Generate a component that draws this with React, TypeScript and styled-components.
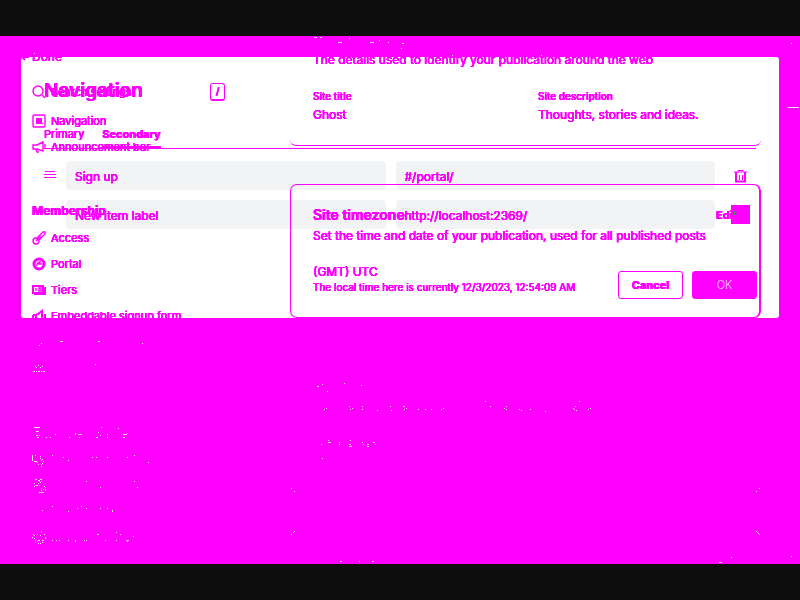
import React from "react";
import styled, { createGlobalStyle } from "styled-components";

const MAGENTA = "#ff00ff";

const GlobalStyle = createGlobalStyle`
  * { box-sizing: border-box; }
  body { margin: 0; background: #0d0d0d; }
  button, input { font: inherit; color: inherit; text-shadow: inherit; }
  h1, h2, p, dl, dd, ul { margin: 0; padding: 0; }
`;

const Page = styled.div`
  position: relative;
  min-height: 100vh;
  padding: 36px 0;
  display: flex;
  overflow: hidden;
  font-family: Inter, "Liberation Sans", sans-serif;
  font-size: 12px;
  line-height: 16px;
  font-weight: 400;
  color: ${MAGENTA};
  text-shadow: 0 0 0 ${MAGENTA}, 0 0 0 ${MAGENTA}, 0 0 0 ${MAGENTA}, 0 0 0 ${MAGENTA}, 0 0 0 ${MAGENTA};
`;

const Stage = styled.main`
  flex: 1;
  min-width: 0;
  padding: 21px;
  background: ${MAGENTA};
`;

const Panel = styled.div`
  position: relative;
  overflow: hidden;
  background: #fff;
  border-radius: 3px;
`;

const Dialog = styled.section`
  padding: 20px 22px 19px 23px;
`;

const DialogTitle = styled.h1`
  font-size: 19px;
  line-height: 28px;
  font-weight: 600;
`;

const Tabs = styled.div`
  display: flex;
  gap: 18px;
  margin-top: 21px;
  margin-right: 1px;
  border-bottom: 1px solid ${MAGENTA};
`;

const Tab = styled.button<{ $active?: boolean }>`
  height: 22px;
  padding: 0 0 4px;
  border: 0;
  border-bottom: 2px solid ${(p) => (p.$active ? MAGENTA : "transparent")};
  background: none;
  font-size: 11px;
  font-weight: ${(p) => (p.$active ? 700 : 400)};
`;

const Items = styled.div`
  display: grid;
  gap: 10px;
  margin-top: 12px;
  margin-right: 1px;
`;

const ItemRow = styled.div`
  display: grid;
  grid-template-columns: 22px minmax(0, 1fr) 10px minmax(0, 1fr) 41px;
  align-items: center;
`;

const ItemInput = styled.input<{ $column: number }>`
  grid-column: ${(p) => p.$column};
  width: 100%;
  height: 29px;
  padding: 2px 9px 0;
  border: 0;
  border-radius: 4px;
  background: #f1f3f4;
  outline: none;
  &::placeholder { color: ${MAGENTA}; opacity: 1; }
`;

const IconButton = styled.button`
  grid-column: 5;
  display: flex;
  justify-content: flex-end;
  padding: 0 8px 0 0;
  border: 0;
  background: none;
`;

const Footer = styled.footer`
  display: flex;
  justify-content: flex-end;
  gap: 9px;
  margin-top: 42px;
`;

const ActionButton = styled.button<{ $primary?: boolean }>`
  min-width: 65px;
  height: 28px;
  padding: 0 8px;
  border: 1px solid ${MAGENTA};
  border-radius: 3px;
  background: ${(p) => (p.$primary ? MAGENTA : "transparent")};
  color: ${(p) => (p.$primary ? "#ffd0ff" : MAGENTA)};
  text-shadow: ${(p) => (p.$primary ? "none" : "inherit")};
  font-size: 11px;
  font-weight: ${(p) => (p.$primary ? 300 : 700)};
`;

const Settings = styled.div`
  position: absolute;
  inset: 0;
  display: grid;
  grid-template-columns: 269px minmax(0, 1fr);
  align-items: start;
  padding-right: 18px;
  pointer-events: none;
`;

const Sidebar = styled.nav`
  margin-top: -8px;
  padding: 0 65px 0 11px;
`;

const Back = styled.a`
  display: flex;
  align-items: center;
  gap: 3px;
  height: 16px;
  margin-left: -11px;
  color: inherit;
  text-decoration: none;
`;

const SearchRow = styled.label`
  display: flex;
  align-items: center;
  gap: 5px;
  height: 28px;
  margin-top: 13px;
`;

const SearchInput = styled.input`
  flex: 1;
  min-width: 0;
  padding: 0;
  border: 0;
  background: none;
  font-size: 11px;
  &::placeholder { color: ${MAGENTA}; opacity: 1; }
`;

const KeyHint = styled.kbd`
  width: 15px;
  height: 18px;
  border: 1px solid ${MAGENTA};
  border-bottom-width: 2px;
  border-radius: 3px;
  font: 500 10px/15px Inter, sans-serif;
  text-align: center;
`;

const NavList = styled.ul<{ $gap: number }>`
  margin-top: ${(p) => p.$gap}px;
  list-style: none;
`;

const NavLink = styled.a`
  display: flex;
  align-items: center;
  gap: 5px;
  height: 26px;
  color: inherit;
  font-size: 11px;
  text-decoration: none;
  white-space: nowrap;
`;

const SectionTitle = styled.h2`
  margin-top: 41px;
  font-size: 12px;
  line-height: 20px;
  font-weight: 700;
`;

const Content = styled.div`
  margin-top: -5px;
`;

const SiteCard = styled.section`
  padding: 0 23px 22px;
  border-bottom: 1px solid ${MAGENTA};
  border-radius: 6px;
`;

const Fields = styled.dl`
  display: grid;
  grid-template-columns: 1fr 1fr;
  column-gap: 25px;
  margin-top: 21px;
  dt { font-size: 10px; line-height: 14px; font-weight: 500; }
  dd { margin-top: 4px; }
`;

const ZoneCard = styled.section`
  margin-top: 38px;
  padding: 20px 9px 23px 22px;
  border: 1px solid ${MAGENTA};
  border-right-width: 2px;
  border-radius: 7px;
`;

const ZoneHead = styled.header`
  display: flex;
  justify-content: space-between;
  height: 23px;
  h2 { font-size: 14px; line-height: 20px; font-weight: 600; }
`;

const EditButton = styled.button`
  position: relative;
  width: 34px;
  height: 20px;
  padding: 0;
  border: 0;
  background: none;
  font-size: 11px;
  font-weight: 700;
  text-align: left;
  line-height: 18px;
  &::after {
    content: "";
    position: absolute;
    inset: 0 0 1px 15px;
    background: ${MAGENTA};
  }
`;

const Zone = styled.p`
  margin-top: 20px;
`;

const Note = styled.p`
  font-size: 10px;
  line-height: 14px;
`;

const Residue = styled.svg`
  position: absolute;
  top: 0;
  left: 0;
  pointer-events: none;
`;

const iconPaths: Record<string, React.ReactNode> = {
  search: <><circle cx="6" cy="6" r="5" /><path d="M10 10l3 3" /></>,
  nav: <><rect x="1" y="1" width="12" height="12" rx="1" /><path d="M4 4h6v5H4z" fill={MAGENTA} stroke="none" /><path d="M4 9.500h7" strokeWidth="1" /></>,
  horn: <><path d="M1 5h4l6-3v9L5 9H1zM4 9l1 3h2M13 4v5" /></>,
  access: <><path d="M5 7l6-6h2v2L7 9" /><circle cx="4" cy="10" r="3" /><path d="M4 10l5-5" /></>,
  portal: <><circle cx="7" cy="7" r="5" strokeWidth="3" /><path d="M5 9V7l2-2h2M7 5v2h3" /></>,
  tiers: <><path d="M1 3h10v7H1zM3 10v1h10V5h-2" strokeWidth="2" /><path d="M4 5v3M7 5h2v3H7z" /></>,
  embed: <><path d="M1 6h3v6M1 6v6M6 5l4-3v9M13 5v5" strokeWidth="2" /><path d="M4 5h3" /></>,
};

function Icon({ name }: { name: string }) {
  return (
    <svg width="14" height="14" viewBox="0 0 14 14" fill="none" stroke={MAGENTA} strokeWidth="1.4" aria-hidden="true">
      {iconPaths[name]}
    </svg>
  );
}

function NavItem({ icon, label }: { icon: string; label: string }) {
  return <li><NavLink href="#"><Icon name={icon} />{label}</NavLink></li>;
}

/* Faint unmatched pixels, one entry per run: x, y, width, height. */
const specks =
  "314,37,3 320,37,2 349,38 338,42,4 370,42,4 379,40 388,42 402,43,2 401,48 452,55 541,55 791,43 788,107,11 34,53 " +
  "60,341,3 98,341,2 142,343 41,343 39,345 38,365 35,366 36,367 40,367 42,366 95,364 33,371,2 36,371 38,371,2 41,371 43,371,2 " +
  "34,427,6 36,431,3 36,435,2 39,435 37,437,2 46,437 50,437 55,434 75,433,1,2 78,434,4 69,437 79,437 101,427 98,432 100,435 96,437,2 107,434 107,437 118,428 123,434,4 127,433 123,437,2 " +
  "32,455,1,6 35,455 40,456 40,458 42,459 34,461,3 37,462 43,461 41,460 38,464 41,464 42,463 41,466 52,455 63,457 68,460 92,457 96,457 107,457 127,457 134,455 148,462 " +
  "35,479,2 38,480,2 40,479,2 41,481 39,481 34,483 38,483 40,482 35,485,3 39,485 34,486 44,486 45,487 41,488 43,489 45,489,1,2 41,490 39,492,5 86,481 134,481 100,487 137,487 " +
  "52,506 42,510 68,511 77,508 81,506 86,508 100,508 107,508 112,510,1,2 " +
  "41,531 33,534 34,535 37,534 40,535 44,534 32,537 34,538 45,537,1,2 35,540 38,540,2 42,540,2 37,541 35,542 42,542 38,543 40,543 52,540 56,540 59,540 68,540 75,540,1,2 84,540 86,540 97,534,2 105,540 116,532 116,540 120,534 126,540,3 127,541 133,536 " +
  "317,386,2 322,384 327,391 344,383 361,385 324,409 326,408 349,406 350,409 352,408 362,406 362,409 377,410 390,406 391,410 403,406,2 404,409 406,408 418,409 425,409 431,409 441,409 443,408 485,401 490,406 504,408 506,406 506,409 519,409 521,410 530,409 545,411 579,401 575,406 573,408 574,409 576,410 588,409 590,408 " +
  "321,444 328,440 328,442,3 339,442 339,444 350,440 349,444,2 349,446,3 362,442 363,444 367,444,2 367,446,2 373,442,2 375,444 322,458 " +
  "291,488 294,491 291,534 293,532 294,531 340,561,2 359,561 372,561,2 756,491 759,488 756,531 757,532 758,533 759,534 731,557 719,562,3 791,556";

const speckRuns = specks.split(" ").map((run) => run.split(",").map(Number));

export default function App() {
  return (
    <Page>
      <GlobalStyle />
      <Stage>
        <Panel>
          <Dialog aria-label="Navigation">
            <DialogTitle>Navigation</DialogTitle>
            <Tabs role="tablist">
              <Tab role="tab" aria-selected={false}>Primary</Tab>
              <Tab role="tab" aria-selected $active>Secondary</Tab>
            </Tabs>
            <Items>
              <ItemRow>
                <svg width="12" height="14" viewBox="0 0 12 14" stroke={MAGENTA} aria-hidden="true">
                  <path d="M1 2.5h10M0 5.500h12M0 8.500h12" />
                </svg>
                <ItemInput $column={2} aria-label="Label" defaultValue="Sign up" />
                <ItemInput $column={4} aria-label="URL" defaultValue="#/portal/" />
                <IconButton aria-label="Delete">
                  <svg width="14" height="14" viewBox="0 0 14 14" fill="none" stroke={MAGENTA}>
                    <path d="M0 3h13M4 2.500V1.500h5v1M5.500 6v5M8.500 6v5" />
                    <path d="M2 3v9.500h9V3" strokeWidth="2" />
                  </svg>
                </IconButton>
              </ItemRow>
              <ItemRow>
                <ItemInput $column={2} aria-label="New item label" placeholder="New item label" />
                <ItemInput $column={4} aria-label="New item URL" defaultValue="http://localhost:2369/" />
              </ItemRow>
            </Items>
            <Footer>
              <ActionButton>Cancel</ActionButton>
              <ActionButton $primary>OK</ActionButton>
            </Footer>
          </Dialog>

          <Settings>
            <Sidebar>
              <Back href="#">
                <svg width="8" height="8" viewBox="0 0 8 8" fill="none" stroke={MAGENTA} strokeWidth="2" aria-hidden="true">
                  <path d="M8 4H1M4 1L1 4l3 3" />
                </svg>
                Done
              </Back>
              <SearchRow>
                <Icon name="search" />
                <SearchInput aria-label="Search settings" placeholder="Search settings" />
                <KeyHint>/</KeyHint>
              </SearchRow>
              <NavList $gap={2}>
                <NavItem icon="nav" label="Navigation" />
                <NavItem icon="horn" label="Announcement bar" />
              </NavList>
              <SectionTitle>Membership</SectionTitle>
              <NavList $gap={4}>
                <NavItem icon="access" label="Access" />
                <NavItem icon="portal" label="Portal" />
                <NavItem icon="tiers" label="Tiers" />
                <NavItem icon="embed" label="Embeddable signup form" />
              </NavList>
            </Sidebar>
            <Content>
              <SiteCard>
                <p>The details used to identify your publication around the web</p>
                <Fields>
                  <div><dt>Site title</dt><dd>Ghost</dd></div>
                  <div><dt>Site description</dt><dd>Thoughts, stories and ideas.</dd></div>
                </Fields>
              </SiteCard>
              <ZoneCard>
                <ZoneHead>
                  <h2>Site timezone</h2>
                  <EditButton>Edit</EditButton>
                </ZoneHead>
                <p>Set the time and date of your publication, used for all published posts</p>
                <Zone>(GMT) UTC</Zone>
                <Note>The local time here is currently 12/3/2023, 12:54:09 AM</Note>
              </ZoneCard>
            </Content>
          </Settings>
        </Panel>
      </Stage>
      <Residue width="800" height="600" aria-hidden="true">
        {speckRuns.map(([x, y, w = 1, h = 1]) => (
          <rect key={`${x}-${y}`} x={x} y={y} width={w} height={h} fill="#ffe0f4" />
        ))}
        <rect x="734" y="211" width="1" height="4" fill="#30a060" />
      </Residue>
    </Page>
  );
}
